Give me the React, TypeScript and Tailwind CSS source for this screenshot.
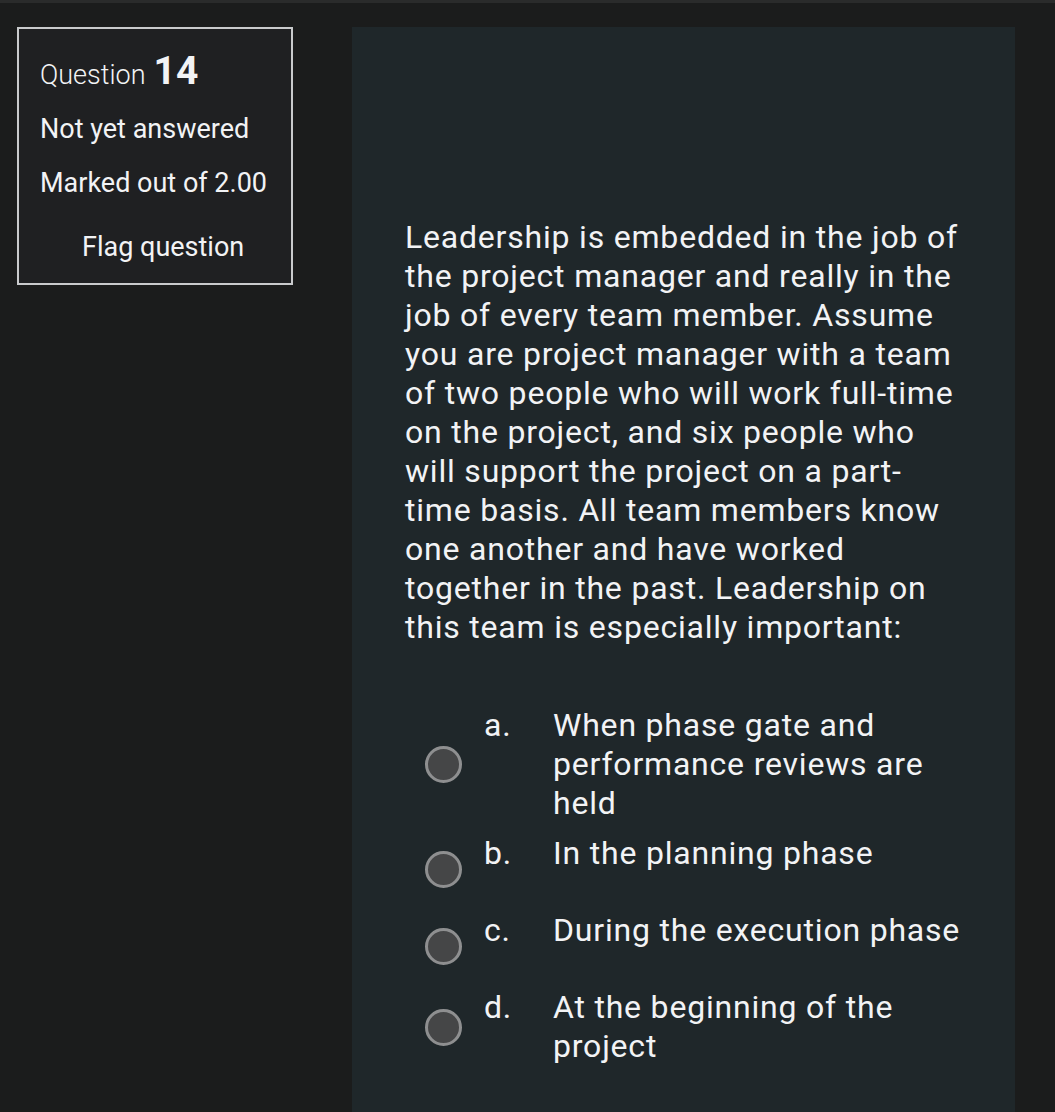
import React from 'react';

const options = [
  { letter: 'a.', text: 'When phase gate and performance reviews are held', mt: 'mt-0' },
  { letter: 'b.', text: 'In the planning phase', mt: 'mt-[11px]' },
  { letter: 'c.', text: 'During the execution phase', mt: 'mt-[7px]' },
  { letter: 'd.', text: 'At the beginning of the project', mt: 'mt-[7px]' },
];

const QuestionInfo: React.FC = () => (
  <div className="w-[276px] h-[258px] border-2 border-[#c9cacc] bg-[#1f2022] px-[21px] pt-[15px] text-[#f2f3f5] text-[27px] leading-[54px]">
    <div>
      <span className="font-light">Question</span>
      <span className="ml-[8px] text-[39px] font-bold">14</span>
    </div>
    <div>Not yet answered</div>
    <div>Marked out of 2.00</div>
    <div className="mt-[10px] pl-[42px]">Flag question</div>
  </div>
);

const Radio: React.FC = () => (
  <div className="w-[37px] h-[37px] shrink-0 rounded-full border-[3px] border-[#8e8f90] bg-[#454647]" />
);

export default function App() {
  return (
    <div
      className="min-h-[1112px] bg-[#1b1c1c] border-t-[3px] border-[#2a2b2b] flex gap-[59px] pl-[17px] pt-[24px] text-[#f2f3f5]"
      style={{ fontFamily: 'Roboto, "Liberation Sans", sans-serif' }}
    >
      <div className="shrink-0">
        <QuestionInfo />
      </div>
      <div className="w-[663px] h-[1085px] bg-[#1f272a] pl-[53px] pt-[191px]">
        <p className="w-[558px] text-[32px] leading-[39px] tracking-[0.8px]">
          Leadership is embedded in the job of the project manager and really in the job of every team
          member. Assume you are project manager with a team of two people who will work full-time on the
          project, and six people who will support the project on a part-time basis. All team members know
          one another and have worked together in the past. Leadership on this team is especially important:
        </p>
        <div className="mt-[59px] pl-[20px] flex flex-col">
          {options.map((o) => (
            <div key={o.letter} className={`flex items-center min-h-[70px] ${o.mt}`}>
              <Radio />
              <div className="self-start flex text-[32px] leading-[39px] tracking-[0.8px]">
                <span className="w-[91px] pl-[22px] shrink-0">{o.letter}</span>
                <span className="w-[420px]">{o.text}</span>
              </div>
            </div>
          ))}
        </div>
      </div>
    </div>
  );
}
